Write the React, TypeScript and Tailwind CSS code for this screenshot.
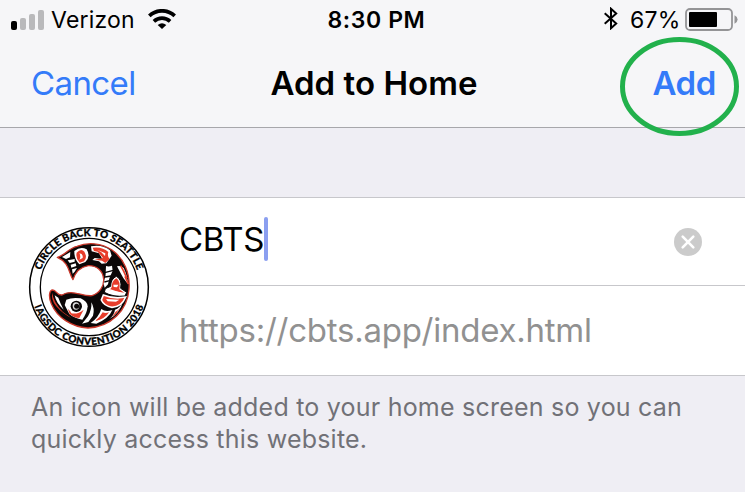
import React from 'react';

function Signal() {
  return (
    <div className="flex h-[20px] items-end gap-[3px]">
      <i className="h-[9px] w-[6px] rounded-[2px] bg-black" />
      <i className="h-[12px] w-[6px] rounded-[2px] bg-[#b9b9bb]" />
      <i className="h-[16px] w-[6px] rounded-[2px] bg-[#b9b9bb]" />
      <i className="h-[20px] w-[6px] rounded-[2px] bg-[#b9b9bb]" />
    </div>
  );
}

function Wifi() {
  return (
    <svg width="28" height="21" viewBox="0 0 28 21" fill="none" stroke="#000" strokeWidth="3.7">
      <path d="M1.3 6.8C8.5 .1 19.5 .1 26.7 6.8" />
      <path d="M5.9 12.3C10.6 8.1 17.4 8.1 22.1 12.3" />
      <path d="M14 20L9.7 16Q14 12.4 18.3 16Z" fill="#000" stroke="none" />
    </svg>
  );
}

function Bluetooth() {
  return (
    <svg width="14" height="23" viewBox="0 0 14 23" fill="none" stroke="#000" strokeWidth="2">
      <path d="M.7 6.2L12.2 16.4L7 21.2V1.8L12.2 6.6L.7 16.8" />
    </svg>
  );
}

function Battery() {
  return (
    <svg width="53" height="23" viewBox="0 0 53 23">
      <rect x="1" y="1" width="46" height="21" rx="4" fill="none" stroke="#949496" strokeWidth="1.8" />
      <rect x="4" y="4" width="28" height="15" rx="1" fill="#000" />
      <path d="M49.5 7.3Q52.6 8.8 52.6 11.5T49.5 15.7Z" fill="#949496" />
    </svg>
  );
}

function SalmonLogo() {
  return (
    <svg className="block h-[140px] w-[140px]" viewBox="0 0 420 420">
      <defs>
        <path id="arc-top" d="M54 213A153 153 0 0 1 360 213" />
        <path id="arc-bottom" d="M33 213A174 174 0 0 0 381 213" />
      </defs>
      <circle cx="207" cy="213" r="178" fill="#fff" stroke="#000" strokeWidth="4.5" />
      <circle cx="207" cy="213" r="146" fill="none" stroke="#000" strokeWidth="4" />
      <g fontFamily="Lato, sans-serif" fontWeight="900" fontSize="30" fill="#000" stroke="#000" strokeWidth="0.9" textAnchor="middle">
        <text textLength="378" lengthAdjust="spacing">
          <textPath href="#arc-top" startOffset="50%" textLength="378">CIRCLE BACK TO SEATTLE</textPath>
        </text>
        <text textLength="428" lengthAdjust="spacing">
          <textPath href="#arc-bottom" startOffset="50%" textLength="428">IAGSDC CONVENTION 2018</textPath>
        </text>
      </g>

      {/* body and tail */}
      <path
        d="M112 124C133 119 144 98 171 91C202 78 244 80 276 102C311 127 331 170 327 220C322 282 274 333 204 336C155 333 111 304 94 263C84 240 89 222 98 222C110 222 110 239 126 237C156 218 187 243 216 239C240 231 252 209 251 190C249 163 229 148 205 149C182 153 166 168 159 191C146 171 148 139 112 124Z"
        fill="#0b0707"
        stroke="#c9372a"
        strokeWidth="4"
        strokeLinejoin="round"
      />
      {/* tail fins */}
      <g fill="#fff">
        <path d="M126 123L151 108L150 124L138 129Z" />
        <path d="M143 133L164 129L164 137L149 141Z" />
        <path d="M152 146L167 142L169 150L154 155Z" />
        <path d="M156 160L171 156L164 167L158 173Z" />
        <path d="M163 105Q182 90 200 100Q213 122 196 138L178 145Q162 129 163 105Z" />
      </g>
      <path d="M170 110Q183 95 193 107Q203 124 192 136L179 140Q166 127 170 110Z" fill="#e73d2b" />
      <path d="M178 112Q190 113 188 126L178 131Q184 123 178 112Z" fill="#fff" />

      {/* upper back */}
      <path d="M213 91Q246 84 270 103L275 119L259 142L245 143L237 136L217 132L224 126L247 129L237 112L215 106Z" fill="#fff" />
      <path d="M218 95Q247 91 265 108Q261 121 269 129L256 141L246 134L224 131L249 126L233 107L222 105Z" fill="#e73d2b" />
      <path d="M231 101L256 112L255 120L244 109Z" fill="#fff" />
      <path d="M258 150Q266 153 276 149L278 164Q267 184 264 205L254 215L251 203Q259 178 258 150Z" fill="#fff" />
      <path d="M254 170L280 163M255 183L274 180M253 198L269 194" stroke="#0b0707" strokeWidth="4" />
      <path d="M291 151Q302 148 311 156Q322 178 323 203Q309 188 302 172Z" fill="#fff" />
      <path d="M302 149L313 169M309 162L321 187M315 181L325 204" fill="none" stroke="#e73d2b" strokeWidth="5" />

      {/* side fins */}
      <path d="M272 211Q272 189 289 181Q307 190 302 217L320 229L315 240Q280 244 253 229L256 218Z" fill="#fff" stroke="#0b0707" strokeWidth="3" />
      <path d="M275 214Q275 195 289 187Q302 196 298 220L313 230L268 223Z" fill="#e73d2b" />
      <path d="M280 206L295 206L291 214L281 213Z" fill="#fff" />
      <path d="M262 219L311 235" stroke="#fff" strokeWidth="4" />
      <path d="M250 237Q282 250 317 243Q305 273 276 274Q252 270 244 252Z" fill="#e73d2b" stroke="#fff" strokeWidth="5" />
      <path d="M258 249L298 251L288 257L263 256Z" fill="#fff" />

      {/* mouth */}
      <path d="M97 230Q99 257 128 287L155 307Q128 293 108 270Q92 249 97 230Z" fill="#d83827" />
      <path d="M104 238Q108 261 131 281Q120 260 115 245Z" fill="#fff" />

      {/* head and eye */}
      <path d="M139 251Q157 243 182 247Q202 256 203 271Q201 292 187 311Q163 307 148 294L134 267Z" fill="#fff" />
      <ellipse cx="169" cy="271" rx="17" ry="17" fill="#0b0707" />
      <ellipse cx="168" cy="270" rx="10" ry="11" fill="#ddd" />
      <circle cx="170" cy="271" r="7.5" fill="#0b0707" />
      <path d="M143 278Q151 284 154 292Q173 296 191 281L178 306Q163 306 149 294Z" fill="#e73d2b" />

      {/* gill and belly */}
      <path d="M204 301Q216 280 214 259Q225 278 219 299L205 318L186 323Z" fill="#fff" />
      <path d="M212 321Q235 306 244 279Q257 290 277 282Q267 307 229 323Z" fill="#fff" />
      <path d="M225 315Q242 302 248 289Q257 293 267 289Q256 309 225 315Z" fill="#e73d2b" />
      <path d="M285 281Q299 276 309 257Q298 293 268 309Q283 297 285 281Z" fill="#fff" />
      <path d="M287 287Q295 284 301 274Q292 293 276 303Z" fill="#e73d2b" />
    </svg>
  );
}

export default function App() {
  return (
    <div className="relative flex h-[492px] w-[745px] flex-col overflow-hidden bg-[#efeef4] font-['Inter','Noto_Sans',sans-serif] text-black">
      <header className="h-[128px] border-b border-[#a7a7ab] bg-[#f6f6f8]">
        <div className="grid h-[40px] grid-cols-3 items-center whitespace-nowrap text-[23px] leading-[40px]">
          <div className="flex items-center pl-[11px]">
            <Signal />
            <span className="ml-[7px] w-[84px] tracking-[0.2px]">Verizon</span>
            <span className="ml-[13px] -mt-[2px]"><Wifi /></span>
          </div>
          <span className="pl-[8px] text-center font-semibold tracking-[0.6px]">8:30 PM</span>
          <div className="flex items-center justify-end pr-[7px]">
            <span className="-mt-[3px]"><Bluetooth /></span>
            <span className="ml-[12px] w-[50px] tracking-[0.3px]">67%</span>
            <span className="ml-[5px] -mt-[1px]"><Battery /></span>
          </div>
        </div>
        <nav className="grid h-[87px] grid-cols-3 whitespace-nowrap text-[33px] leading-[87px]">
          <span className="pl-[31px] tracking-[-0.6px] text-[#347bf9]">Cancel</span>
          <span className="pl-[3px] text-center font-semibold tracking-[0.05px]">Add to Home</span>
          <span className="pr-[29px] text-right font-semibold tracking-[-0.4px] text-[#347bf9]">Add</span>
        </nav>
      </header>

      <section className="mt-[69px] flex h-[179px] border-y border-[#c7c7cb] bg-white">
        <div className="w-[179px] pl-[20px] pt-[18px]"><SalmonLogo /></div>
        <div className="flex flex-1 flex-col text-[33px]">
          <div className="flex h-[88px] items-center border-b border-[#c7c7cb] pr-[43px]">
            <div className="-mt-[6px] flex items-center">
              <span className="w-[85px] whitespace-nowrap leading-[80px] tracking-[-0.3px]">CBTS</span>
              <i className="h-[44px] w-[4px] rounded-[2px] bg-[#8b9ff0]" />
            </div>
            <svg className="ml-auto" width="28" height="28" viewBox="0 0 28 28">
              <circle cx="14" cy="14" r="14" fill="#cbcbcb" />
              <path d="M8.7 8.7L19.3 19.3M19.3 8.7L8.7 19.3" stroke="#fff" strokeWidth="2.6" strokeLinecap="round" />
            </svg>
          </div>
          <span className="whitespace-nowrap leading-[89px] tracking-[-0.25px] text-[#919191]">https://cbts.app/index.html</span>
        </div>
      </section>

      <p className="whitespace-nowrap pl-[31px] pt-[15px] text-[25px] leading-[32px] tracking-[0.22px] text-[#717177]">
        An icon will be added to your home screen so you can
        <br />
        quickly access this website.
      </p>

      <svg className="absolute left-[618px] top-[35px]" width="124" height="104" viewBox="0 0 124 104">
        <ellipse cx="61.5" cy="51.5" rx="57" ry="47" fill="none" stroke="#22b14c" strokeWidth="5" />
      </svg>
    </div>
  );
}
